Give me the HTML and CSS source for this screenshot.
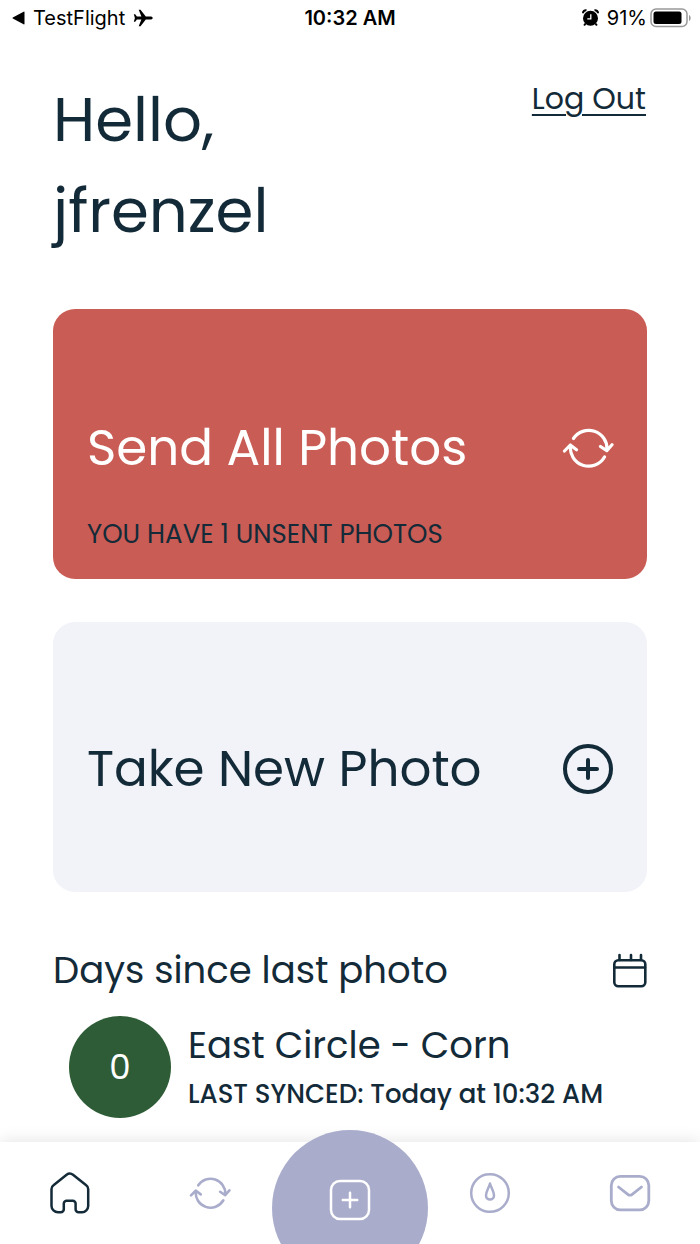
FILE: index.html
```html
<!DOCTYPE html>
<html lang="en">
<head>
<meta charset="utf-8">
<meta name="viewport" content="width=device-width, initial-scale=1">
<title>Home</title>
<link rel="stylesheet" href="styles.css">
</head>
<body>
<div class="status">
  <div class="status-left">
    <svg width="13" height="14" viewBox="0 0 13 14" aria-hidden="true"><path d="M12.500 1.200v11.600a.6.6 0 0 1-.9.5L.8 7.500a.6.6 0 0 1 0-1L11.600.7a.6.6 0 0 1 .9.5z"/></svg>
    <span>TestFlight</span>
    <svg width="20" height="18" viewBox="0 0 20 18" aria-hidden="true"><path d="M19.800 9c0-.9-1.200-1.500-2.500-1.500h-4.500L7.500.7H5.700l2.700 6.800H3.900L2.200 5.300H.8L1.900 9 .8 12.700h1.400l1.700-2.200h4.500l-2.700 6.800h1.800l5.300-6.800h4.500c1.300 0 2.500-.6 2.500-1.500z"/></svg>
  </div>
  <div class="status-time">10:32 AM</div>
  <div class="status-right">
    <svg width="17" height="18" viewBox="0 0 17 18" aria-hidden="true"><circle cx="8.500" cy="9.300" r="7.500"/><path d="M1 4.200A3 3 0 0 1 4.500 1.200M16 4.200A3 3 0 0 0 12.500 1.200M3.600 14.500l-1.500 2M13.400 14.500l1.500 2" fill="none" stroke="#000" stroke-width="2"/><path d="M8.800 5.300v4.500H5.300" fill="none" stroke="#fff" stroke-width="1.300"/></svg>
    <span class="percent">91%</span>
    <svg width="42" height="20" viewBox="0 0 42 20" aria-hidden="true"><rect x="1" y="1" width="36" height="17.500" rx="5" fill="none" stroke="#999" stroke-width="1.500"/><rect x="3.500" y="3.500" width="28" height="12.500" rx="2.500"/><path d="M39 7v6c2.200-1 2.200-5 0-6z" fill="#999"/></svg>
  </div>
</div>

<main class="page">
  <header class="top">
    <h1 class="greeting">Hello,<br>jfrenzel</h1>
    <a class="logout" href="#">Log Out</a>
  </header>

  <button class="card card-send" type="button">
    <span class="card-row">
      <span class="card-title">Send All Photos</span>
      <svg class="card-icon" viewBox="0 0 52 52" aria-hidden="true"><use href="#sync"/></svg>
    </span>
    <span class="card-note">YOU HAVE 1 UNSENT PHOTOS</span>
  </button>

  <button class="card card-take" type="button">
    <span class="card-row">
      <span class="card-title">Take New Photo</span>
      <svg class="card-icon" viewBox="0 0 52 52" aria-hidden="true"><g fill="none" stroke="currentColor" stroke-width="4" stroke-linecap="round"><circle cx="26" cy="26" r="23"/><path d="M26 17v18M17 26h18"/></g></svg>
    </span>
  </button>

  <section class="recent">
    <div class="recent-head">
      <h2 class="recent-title">Days since last photo</h2>
      <svg width="36" height="36" viewBox="0 0 36 36" aria-hidden="true"><g fill="none" stroke="currentColor" stroke-width="2.600" stroke-linecap="round"><rect x="3.300" y="8.300" width="31" height="26" rx="4"/><path d="M4 15.500h30M8.500 3v5M20 3v5M30 3v5"/></g></svg>
    </div>
    <div class="field">
      <span class="days">0</span>
      <div class="field-text">
        <div class="field-name">East Circle - Corn</div>
        <div class="field-sync">LAST SYNCED: Today at 10:32 AM</div>
      </div>
    </div>
  </section>
</main>

<nav class="tabs">
  <a class="tab tab-active" href="#" aria-label="Home"><svg width="42" height="42" viewBox="0 0 42 42"><path d="M17.600 2.800 4.500 13.200A4.500 4.500 0 0 0 2.500 17v17a6.500 6.500 0 0 0 6.500 6.300h2.800a3 3 0 0 0 3-3V31.500a2.800 2.800 0 0 1 2.800-2.800h6.200a2.800 2.800 0 0 1 2.800 2.800v5.800a3 3 0 0 0 3 3H33a6.500 6.500 0 0 0 6.200-6.300V17a4.500 4.500 0 0 0-2-3.800L24 2.800a5.300 5.300 0 0 0-6.400 0z" fill="none" stroke="currentColor" stroke-width="2.500"/></svg></a>
  <a class="tab" href="#" aria-label="Sync"><svg width="42" height="42" viewBox="0 0 52 52"><g id="sync" fill="none" stroke="currentColor" stroke-width="3.200" stroke-linecap="round" stroke-linejoin="round"><path d="M11.500 16.500A18.300 18.300 0 0 1 45 27.500M38.500 24.500l6.300 4.200 5.200-6M42.500 35A18.300 18.300 0 0 1 8.500 23.500M2.500 29l5.800-6 6.200 4.700"/></g></svg></a>
  <a class="tab" href="#" aria-label="New photo"><span class="bubble"><svg width="42" height="42" viewBox="0 0 42 42"><g fill="none" stroke="currentColor" stroke-width="2.500" stroke-linecap="round"><rect x="2" y="2" width="38" height="38" rx="9"/><path d="M21 13.800v14.400M13.800 21h14.400"/></g></svg></span></a>
  <a class="tab" href="#" aria-label="Moisture"><svg width="42" height="42" viewBox="0 0 42 42"><g fill="none" stroke="currentColor" stroke-width="2.500" stroke-linejoin="round"><circle cx="21" cy="21" r="18.800"/><path d="M21 11.500c-1 4-4 8-4 12a4 4 0 0 0 8 0c0-4-3-8-4-12z"/></g></svg></a>
  <a class="tab" href="#" aria-label="Messages"><svg width="42" height="42" viewBox="0 0 42 42"><g fill="none" stroke="currentColor" stroke-width="2.800" stroke-linecap="round"><rect x="2.300" y="4.300" width="37.500" height="33.500" rx="9"/><path d="M9.500 15l9.300 7.300a3.600 3.600 0 0 0 4.400 0L32.500 15"/></g></svg></a>
</nav>
</body>
</html>
```
FILE: styles.css
```css
* { box-sizing: border-box; }
body {
  margin: 0;
  background: #fff;
  color: #132a38;
  font-family: Poppins, Inter, sans-serif;
}
svg { display: block; flex: none; }
a { color: inherit; }

.status {
  display: grid;
  grid-template-columns: 1fr auto 1fr;
  align-items: center;
  height: 36px;
  padding: 0 8px;
  color: #000;
  font-family: Inter, sans-serif;
  font-size: 20px;
}
.status-left, .status-right { display: flex; align-items: center; gap: 8px; }
.status-left { padding-left: 4px; }
.status-right { justify-content: flex-end; }
.status-time { font-weight: 600; }
.percent { margin-right: -5px; }

.page { padding: 38px 53px 110px; }
.top { display: flex; justify-content: space-between; align-items: flex-start; }
.greeting { margin: 0; font-size: 61px; line-height: 91px; font-weight: 400; }
.logout { margin: 5px 1px 0 0; font-size: 30px; line-height: 40px; text-decoration-thickness: 2px; text-underline-offset: 5px; }

.card {
  display: flex;
  flex-direction: column;
  align-items: stretch;
  justify-content: center;
  width: 100%;
  height: 270px;
  padding: 0 33px 0 34px;
  border: 0;
  border-radius: 22px;
  font: inherit;
  color: inherit;
  text-align: left;
}
.card-send { margin-top: 53px; padding-top: 71px; background: #c95c54; }
.card-take { margin-top: 43px; padding-top: 24px; background: #f2f3f8; }
.card-row { display: flex; justify-content: space-between; align-items: center; height: 80px; }
.card-send .card-row { color: #fff; }
.card-title { font-size: 50px; }
.card-icon { width: 52px; height: 52px; }
.card-note { display: block; margin-top: 28px; font-size: 26px; line-height: 36px; }

.recent { margin-top: 48px; }
.recent-head { display: flex; justify-content: space-between; align-items: center; height: 60px; }
.recent-title { margin: 0; font-size: 37px; font-weight: 400; }
.field { display: flex; align-items: center; gap: 17px; margin-top: 16px; padding-left: 16px; }
.days {
  display: grid;
  place-items: center;
  flex: none;
  width: 102px;
  height: 102px;
  border-radius: 50%;
  background: #2e5c36;
  color: #fff;
  font-size: 34px;
}
.field-text { white-space: nowrap; }
.field-name { font-size: 37px; line-height: 54px; }
.field-sync { font-size: 26px; line-height: 44px; font-weight: 500; }

.tabs {
  position: fixed;
  right: 0;
  bottom: 0;
  left: 0;
  display: grid;
  grid-template-columns: repeat(5, 1fr);
  height: 102px;
  background: #fff;
  box-shadow: 0 0 16px rgba(0, 0, 0, 0.12);
  color: #a9adcb;
}
.tab { position: relative; display: flex; justify-content: center; padding-top: 30px; }
.tab-active { color: #132a38; }
.bubble {
  position: absolute;
  top: -12px;
  left: 50%;
  display: flex;
  justify-content: center;
  width: 156px;
  height: 156px;
  margin-left: -78px;
  padding-top: 49px;
  border-radius: 50%;
  background: #a9adcb;
  color: #fff;
}
```
